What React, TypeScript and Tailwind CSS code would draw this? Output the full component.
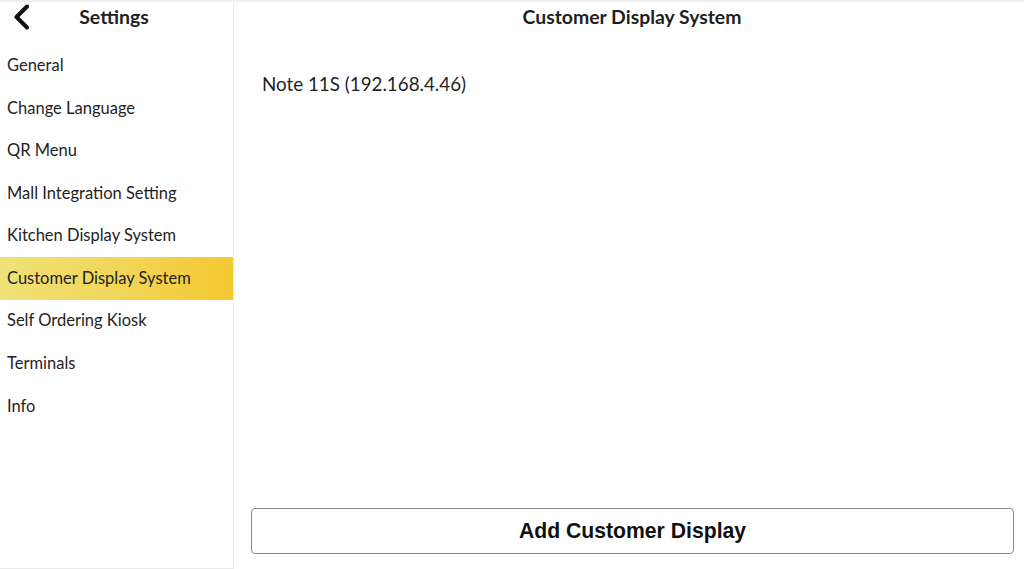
import React from "react";

const items = [
  "General",
  "Change Language",
  "QR Menu",
  "Mall Integration Setting",
  "Kitchen Display System",
  "Customer Display System",
  "Self Ordering Kiosk",
  "Terminals",
  "Info",
];

const active = "Customer Display System";

const App = () => {
  return (
    <div
      className="flex h-[569px] w-[1024px] overflow-hidden bg-white text-[#1f1f1f]"
      style={{ fontFamily: "Lato, 'Open Sans', sans-serif" }}
    >
      {/* sidebar */}
      <aside className="flex w-[234px] flex-col border-r border-[#ececec] border-b">
        <div className="relative flex h-[35px] items-center justify-center border-t-2 border-[#f0f0f0]">
          <button className="absolute left-[11px] top-[2px]">
            <svg width="22" height="26" viewBox="0 0 22 26" fill="none">
              <path d="M16 2.5 L5.5 13 L16 23.5" stroke="#111" strokeWidth="4" strokeLinecap="round" strokeLinejoin="round" />
            </svg>
          </button>
          <h1 className="-mt-[3px] pr-[5px] text-[19.5px] font-bold">Settings</h1>
        </div>
        <nav className="mt-[9px] flex flex-col">
          {items.map((item) => (
            <div
              key={item}
              className={
                "flex h-[42.6px] items-center px-[7px] text-[16.5px] " +
                (item === active ? "bg-gradient-to-r from-[#efe277] to-[#f4c92e]" : "")
              }
            >
              {item}
            </div>
          ))}
        </nav>
      </aside>

      {/* content */}
      <main className="flex flex-1 flex-col border-t-2 border-[#f0f0f0] pb-[15px]">
        <div className="flex h-[30px] items-center justify-center pl-[6px]">
          <h2 className="text-[19.4px] font-bold">Customer Display System</h2>
        </div>
        <div className="flex-1 px-[28px] pt-[38px]">
          <p className="text-[18.8px]">Note 11S (192.168.4.46)</p>
        </div>
        <div className="pl-[17px] pr-[10px]">
          <button
            className="flex h-[46px] w-full items-center justify-center rounded-[4px] border border-[#8a8a8a] text-[21.2px] font-bold text-[#111]"
            style={{ fontFamily: "'Liberation Sans', Arial, sans-serif" }}
          >
            Add Customer Display
          </button>
        </div>
      </main>
    </div>
  );
};

export default App;
